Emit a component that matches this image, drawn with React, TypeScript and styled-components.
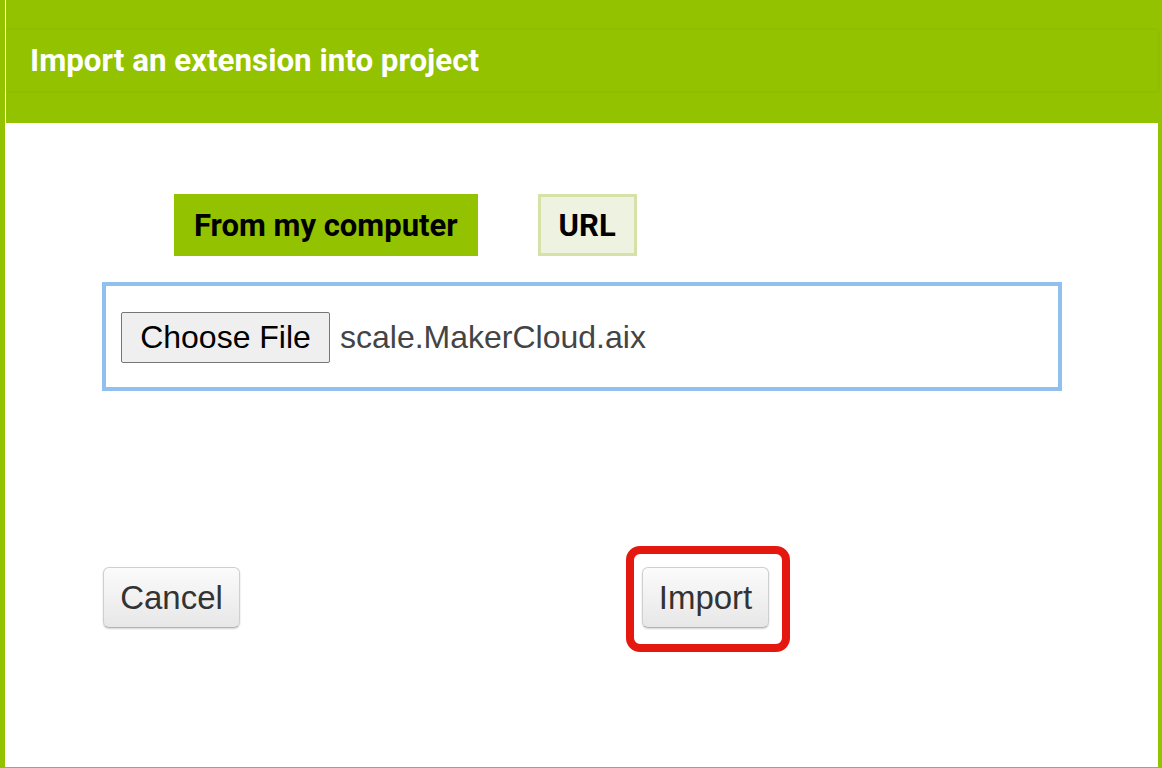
import React from "react";
import styled, { createGlobalStyle } from "styled-components";

const Global = createGlobalStyle`
  html, body { margin: 0; padding: 0; overflow: hidden; }
  body { background: #92c200; }
  * { box-sizing: border-box; }
`;

const Page = styled.div`
  width: 1162px;
  height: 768px;
  display: flex;
  flex-direction: column;
  background: #92c200;
`;

const Header = styled.header`
  height: 123px;
  margin-left: 5px;
  border-left: 1px solid #ffffff;
  padding-top: 30px;
  flex-shrink: 0;
`;

const TitleBar = styled.div`
  height: 61px;
  margin-right: 4px;
  display: flex;
  align-items: center;
  padding-left: 24px;
  box-shadow: 0 0 3px rgba(0, 0, 0, 0.07);
`;

const Title = styled.h1`
  margin: 0;
  font-family: Roboto, "Liberation Sans", sans-serif;
  font-weight: 700;
  font-size: 31.3px;
  color: #ffffff;
  letter-spacing: 0;
`;

const Body = styled.main`
  flex: 1;
  margin: 0 4px 1px 5px;
  background: #ffffff;
  padding: 71px 0 0 97px;
  display: flex;
  flex-direction: column;
`;

const Tabs = styled.div`
  display: flex;
  gap: 60px;
  margin-left: 72px;
`;

const Tab = styled.button<{ $active?: boolean }>`
  height: 62px;
  font-family: Roboto, "Liberation Sans", sans-serif;
  font-weight: 700;
  font-size: 31px;
  color: #000000;
  cursor: pointer;
  background: ${(p) => (p.$active ? "#92c200" : "#eef3e1")};
  border: ${(p) => (p.$active ? "none" : "3px solid #d5e1a6")};
  padding: ${(p) => (p.$active ? "0 20px" : "0 18px")};
  margin: 0;
`;

const FileBox = styled.div`
  margin-top: 26px;
  width: 960px;
  height: 109px;
  border: 4px solid #92c0ee;
  display: flex;
  align-items: flex-start;
  padding: 26px 0 0 15px;
  gap: 10px;
`;

const ChooseButton = styled.button`
  width: 209px;
  height: 51px;
  background: #efefef;
  border: 1px solid #767676;
  border-radius: 2px;
  font-family: "Liberation Sans", Arial, sans-serif;
  font-size: 32px;
  color: #000000;
  padding: 0;
  margin: 0;
`;

const FileName = styled.span`
  font-family: "Liberation Sans", Arial, sans-serif;
  font-size: 32px;
  color: #444444;
  line-height: 51px;
`;

const Footer = styled.div`
  margin-top: 176px;
  display: flex;
  align-items: flex-start;
  padding-left: 1px;
`;

const ActionButton = styled.button<{ $width: number }>`
  width: ${(p) => p.$width}px;
  height: 61px;
  border-radius: 6px;
  border: 1px solid #cfcfcf;
  border-bottom-color: #b4b4b4;
  background: linear-gradient(#fbfbfb, #e7e7e7);
  box-shadow: 0 1px 2px rgba(0, 0, 0, 0.18);
  font-family: "Liberation Sans", Arial, sans-serif;
  font-size: 33px;
  color: #333333;
  padding: 0;
  margin: 0;
  cursor: pointer;
`;

const Highlight = styled.div`
  position: relative;
  margin-left: 402px;
  &::after {
    content: "";
    position: absolute;
    top: -21px;
    left: -16px;
    right: -21px;
    bottom: -24px;
    border: 8px solid #e5180f;
    border-radius: 14px;
    pointer-events: none;
  }
`;

export default function App() {
  return (
    <>
      <Global />
      <Page>
        <Header>
          <TitleBar>
            <Title>Import an extension into project</Title>
          </TitleBar>
        </Header>
        <Body>
          <Tabs>
            <Tab $active>From my computer</Tab>
            <Tab>URL</Tab>
          </Tabs>
          <FileBox>
            <ChooseButton>Choose File</ChooseButton>
            <FileName>scale.MakerCloud.aix</FileName>
          </FileBox>
          <Footer>
            <ActionButton $width={137}>Cancel</ActionButton>
            <Highlight>
              <ActionButton $width={127}>Import</ActionButton>
            </Highlight>
          </Footer>
        </Body>
      </Page>
    </>
  );
}
